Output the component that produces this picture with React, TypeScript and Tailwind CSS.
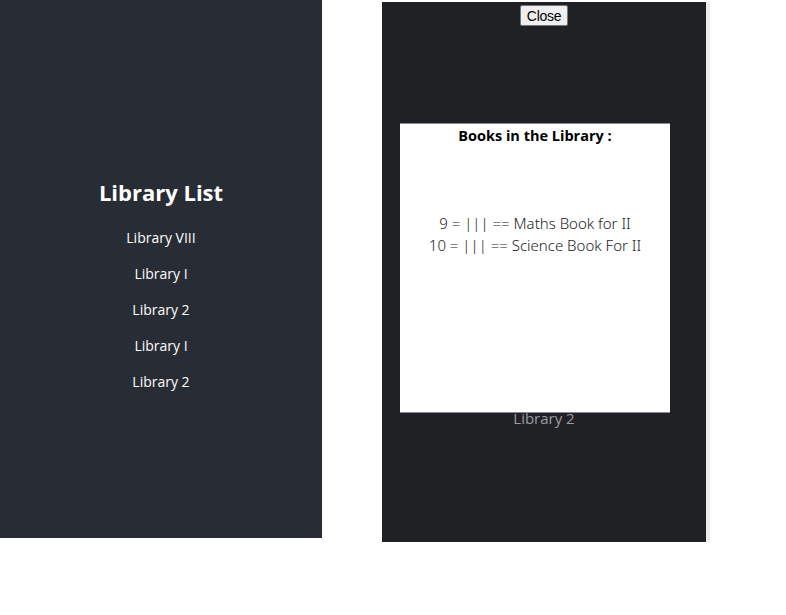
const items = ['Library VIII', 'Library I', 'Library 2', 'Library I', 'Library 2'];

function LibraryList() {
    return (
        <div className="flex h-[538px] w-[322px] flex-col items-center bg-[#282c34] pt-[176px] text-white" style={{ fontFamily: '"Open Sans", "Noto Sans", sans-serif' }}>
            <h1 className="text-[22px] font-bold leading-8">Library List</h1>
            <ul className="mt-[19px] flex flex-col items-center gap-[15px]">
                {items.map((name, i) => (
                    <li key={i} className="text-[14px] leading-[21px]">
                        {name}
                    </li>
                ))}
            </ul>
        </div>
    );
}

function LibraryModal() {
    return (
        <div className="mt-[2px] flex">
            <div className="flex h-[540px] w-[324px] flex-col items-center bg-[#1f2125]">
                <button
                    className="mt-[3px] h-[21px] rounded-[2px] border border-[#767676] bg-[#efefef] px-[6px] text-[14px] leading-none text-black"
                    style={{ fontFamily: '"Liberation Sans Narrow", "Liberation Sans", Arial, sans-serif', letterSpacing: '-0.3px' }}
                >
                    Close
                </button>
                <div className="mt-[97px] flex h-[290px] w-[270px] -translate-x-[9px] flex-col items-center border-y border-[#8a8a8a] bg-white text-black" style={{ fontFamily: '"Open Sans", "Noto Sans", sans-serif' }}>
                    <h2 className="mt-[2px] text-[14.5px] font-bold leading-[20px]">Books in the Library :</h2>
                    <div className="mt-[66px] flex flex-col items-center text-[15px] font-light leading-[22px] text-[#222]" style={{ fontFamily: '"Noto Sans", sans-serif' }}>
                        <p>9 = ||| == Maths Book for II</p>
                        <p>10 = ||| == Science Book For II</p>
                    </div>
                </div>
                <p className="mt-[-6px] text-[15px] leading-[22px] text-[#9a9ca0]" style={{ fontFamily: '"Open Sans", "Noto Sans", sans-serif' }}>
                    Library 2
                </p>
            </div>
            <div className="h-[540px] w-[4px] bg-[#ececec]" />
        </div>
    );
}

export default function App() {
    return (
        <div className="flex h-[615px] w-[786px] items-start gap-[60px] bg-white">
            <LibraryList />
            <LibraryModal />
        </div>
    );
}
